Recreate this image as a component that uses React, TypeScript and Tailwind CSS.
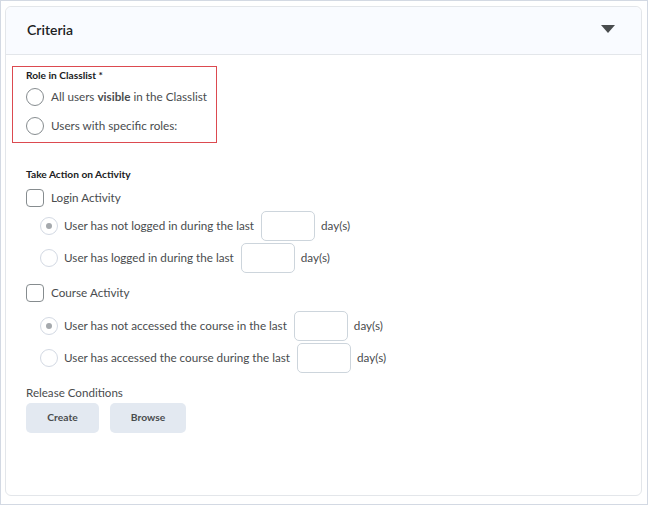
import React from 'react';

const Radio: React.FC<{ checked?: boolean; big?: boolean }> = ({ checked, big }) => (
  <span
    className={
      big
        ? 'flex h-[18px] w-[18px] shrink-0 items-center justify-center rounded-full border border-[#868c8f] bg-white'
        : 'flex h-[18px] w-[18px] shrink-0 items-center justify-center rounded-full border border-[#d3d9e3] bg-white'
    }
  >
    {checked && <span className="h-[6px] w-[6px] rounded-full bg-[#a5a9ad]" />}
  </span>
);

const Checkbox: React.FC = () => (
  <span className="h-[18px] w-[18px] shrink-0 rounded-[4px] border border-[#868c8f] bg-white" />
);

const DayRow: React.FC<{ label: string; checked?: boolean }> = ({ label, checked }) => (
  <div className="flex h-[32px] items-center whitespace-nowrap pl-[14px]">
    <Radio checked={checked} />
    <span className="ml-[6px] text-[11.7px]">{label}</span>
    <span className="ml-[7px] h-[30px] w-[54px] rounded-[5px] border border-[#cdd5dc] bg-white" />
    <span className="ml-[6px] text-[11.7px]">day(s)</span>
  </div>
);

export default function App() {
  return (
    <div
      className="h-[505px] w-[648px] border border-[#d3d9e3] bg-white pl-[4px] pt-[5px] text-[#494c4e]"
      style={{ fontFamily: 'Lato, "Noto Sans", sans-serif' }}
    >
      <div className="flex h-[490px] w-[637px] flex-col rounded-[6px] border border-[#e3e6ea]">
        <header className="flex h-[48px] items-center justify-between rounded-t-[6px] border-b border-[#e3e6ea] bg-[#f9fbff] pb-[3px] pl-[21px] pr-[26px]">
          <h2 className="text-[14px] font-semibold text-[#202122]">Criteria</h2>
          <svg width="14" height="8" viewBox="0 0 14 8">
            <path d="M0 0 H14 L7 8 Z" fill="#494c4e" />
          </svg>
        </header>

        <div className="flex flex-col">
          <div className="ml-[6px] mt-[11px] flex h-[77px] w-[205px] flex-col whitespace-nowrap border-[1.5px] border-[#dc4a50] pl-[13px] pt-[1px]">
            <div className="text-[10.2px] font-bold leading-[14px] text-[#202122]">Role in Classlist *</div>
            <div className="mt-[6px] flex items-center gap-[7px]">
              <Radio big />
              <span className="text-[11.7px]">
                All users <b className="font-bold">visible</b> in the Classlist
              </span>
            </div>
            <div className="mt-[11px] flex items-center gap-[7px]">
              <Radio big />
              <span className="text-[11.7px]">Users with specific roles:</span>
            </div>
          </div>

          <div className="flex flex-col pl-[20px]">
            <div className="mt-[24px] text-[10.2px] font-bold leading-[14px] text-[#202122]">Take Action on Activity</div>
            <div className="mt-[7px] flex h-[20px] items-center gap-[7px]">
              <Checkbox />
              <span className="text-[11.7px]">Login Activity</span>
            </div>
            <div className="mt-[2px]">
              <DayRow label="User has not logged in during the last" checked />
              <DayRow label="User has logged in during the last" />
            </div>
            <div className="mt-[9px] flex h-[20px] items-center gap-[7px]">
              <Checkbox />
              <span className="text-[11.7px]">Course Activity</span>
            </div>
            <div className="mt-[7px]">
              <DayRow label="User has not accessed the course in the last" checked />
              <DayRow label="User has accessed the course during the last" />
            </div>
            <div className="mt-[11px] text-[11.6px] leading-[16px]">Release Conditions</div>
            <div className="mt-[2px] flex gap-[11px]">
              <button className="h-[30px] w-[73px] rounded-[5px] bg-[#e3e9f1] text-[10.3px] font-bold text-[#494c4e]">Create</button>
              <button className="h-[30px] w-[76px] rounded-[5px] bg-[#e3e9f1] text-[10.3px] font-bold text-[#494c4e]">Browse</button>
            </div>
          </div>
        </div>
      </div>
    </div>
  );
}
